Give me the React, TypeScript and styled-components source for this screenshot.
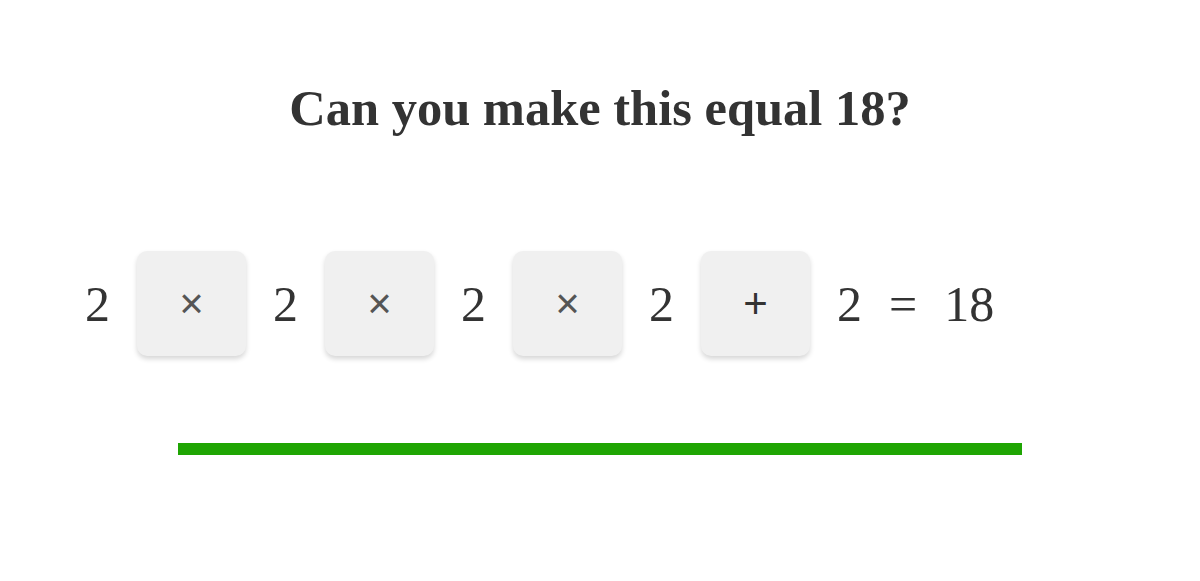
import { Fragment } from 'react'
import styled, { createGlobalStyle } from 'styled-components'

const GlobalStyle = createGlobalStyle`
  html, body {
    margin: 0;
    padding: 0;
    background: #ffffff;
  }
`

const Root = styled.main`
  display: flex;
  flex-direction: column;
  align-items: center;
  width: 1200px;
  min-height: 581px;
  padding-top: 79px;
  box-sizing: border-box;
  font-family: 'Liberation Serif', 'Times New Roman', serif;
  color: #333333;
`

const Title = styled.h1`
  margin: 0;
  font-size: 50.5px;
  font-weight: 700;
  color: #333333;
`

const Equation = styled.div`
  align-self: flex-start;
  display: flex;
  align-items: center;
  gap: 27px;
  margin: 114px 0 0 85px;
`

const Num = styled.span`
  font-size: 50px;
  line-height: 1;
  color: #333333;
`

const OpButton = styled.button<{ $dark?: boolean }>`
  display: flex;
  align-items: center;
  justify-content: center;
  width: 109px;
  height: 105px;
  padding: 0;
  border: none;
  border-radius: 10px;
  background: #f0f0f0;
  box-shadow: 0 3px 5px rgba(0, 0, 0, 0.16);
  font-family: 'Liberation Sans', Arial, sans-serif;
  font-size: 42px;
  font-weight: 300;
  color: ${({ $dark }) => ($dark ? '#333333' : '#555555')};
  cursor: pointer;
`

const Progress = styled.div`
  width: 844px;
  height: 12px;
  margin-top: 87px;
  background: #1fa503;
`

const OPS = ['×', '×', '×', '+']

export default function App() {
  return (
    <>
      <GlobalStyle />
      <Root>
        <Title>Can you make this equal 18?</Title>
        <Equation>
          <Num>2</Num>
          {OPS.map((op, i) => (
            <Fragment key={i}>
              <OpButton $dark={op === '+'}>{op}</OpButton>
              <Num>2</Num>
            </Fragment>
          ))}
          <Num>=</Num>
          <Num>18</Num>
        </Equation>
        <Progress />
      </Root>
    </>
  )
}
